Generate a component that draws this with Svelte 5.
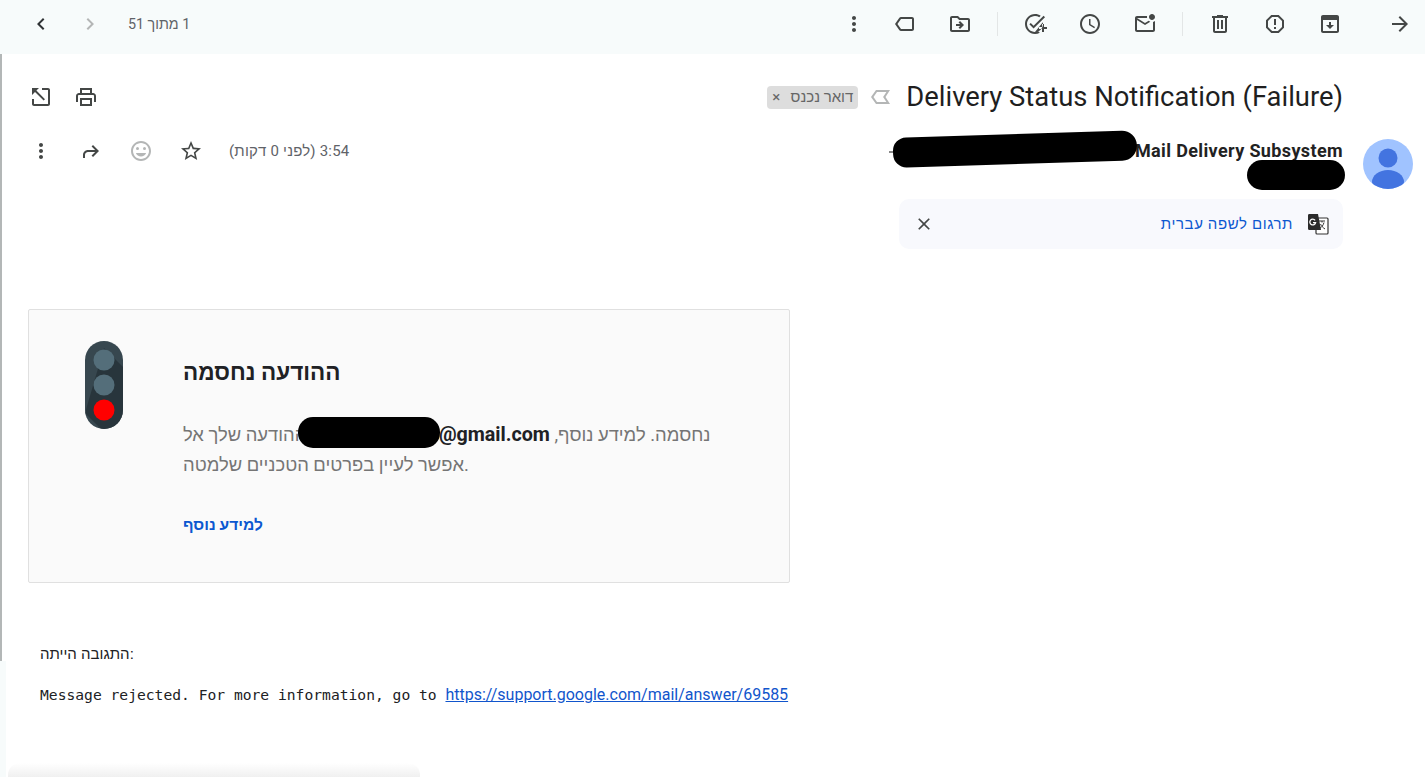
<script>
  const icons = {
    chevL: 'M15.41 7.41L14 6l-6 6 6 6 1.41-1.41L10.83 12z',
    chevR: 'M10 6L8.59 7.41 13.17 12l-4.58 4.59L10 18l6-6z',
    more: 'M12 8c1.1 0 2-.9 2-2s-.9-2-2-2-2 .9-2 2 .9 2 2 2zm0 2c-1.1 0-2 .9-2 2s.9 2 2 2 2-.9 2-2-.9-2-2-2zm0 6c-1.1 0-2 .9-2 2s.9 2 2 2 2-.9 2-2-.9-2-2-2z',
    label: 'M6.37 5.84C6.73 5.33 7.33 5 8 5l11 .01c1.1 0 2 .89 2 1.99v10c0 1.1-.9 1.99-2 1.99L8 19c-.67 0-1.27-.33-1.63-.84L2 12l4.37-6.16zM8 17h11V7H8l-3.55 5L8 17z',
    move: 'M20 6h-8l-2-2H4c-1.1 0-2 .9-2 2v12c0 1.1.9 2 2 2h16c1.1 0 2-.9 2-2V8c0-1.1-.9-2-2-2zm0 12H4V6h5.17l2 2H20v10zM12.16 12H8v2h4.16l-1.6 1.59L12 17l4-4-4-4-1.44 1.41L12.16 12z',
    task: 'M22 5.18L10.59 16.6l-4.24-4.24 1.41-1.41 2.83 2.83 10-10L22 5.18zm-2.21 5.04c.13.57.21 1.17.21 1.78 0 4.42-3.58 8-8 8s-8-3.58-8-8 3.58-8 8-8c1.58 0 3.04.46 4.28 1.25l1.44-1.44C16.1 2.67 14.13 2 12 2 6.48 2 2 6.48 2 12s4.48 10 10 10c1.73 0 3.36-.44 4.78-1.22l-1.5-1.5c-1 .46-2.11.72-3.28.72zM19 15h-3v2h3v3h2v-3h3v-2h-3v-3h-2v3z',
    clock: 'M11.99 2C6.47 2 2 6.48 2 12s4.47 10 9.99 10C17.52 22 22 17.52 22 12S17.52 2 11.99 2zM12 20c-4.42 0-8-3.58-8-8s3.58-8 8-8 8 3.58 8 8-3.58 8-8 8zm.5-13H11v6l5.25 3.15.75-1.23-4.5-2.67z',
    mail: 'M22 8.98V18c0 1.1-.9 2-2 2H4c-1.1 0-2-.9-2-2V6c0-1.1.9-2 2-2h10.1c-.06.32-.1.66-.1 1 0 .34.04.68.1 1H4l8 5 3.67-2.29c.47.43 1.02.76 1.63.98L12 13 4 8v10h16V9.9c.74-.15 1.42-.48 2-.92zM16 5c0 1.66 1.34 3 3 3s3-1.34 3-3-1.34-3-3-3-3 1.34-3 3z',
    trash: 'M15 4V3H9v1H4v2h1v13c0 1.1.9 2 2 2h10c1.1 0 2-.9 2-2V6h1V4h-5zm2 15H7V6h10v13zM9 8h2v9H9zm4 0h2v9h-2z',
    report: 'M15.73 3H8.27L3 8.27v7.46L8.27 21h7.46L21 15.73V8.27L15.73 3zM19 14.9L14.9 19H9.1L5 14.9V9.1L9.1 5h5.8L19 9.1v5.8zM11 7h2v6h-2zm0 8h2v2h-2z',
    inbox: 'M19 3H5c-1.1 0-2 .9-2 2v14c0 1.1.9 2 2 2h14c1.1 0 2-.9 2-2V5c0-1.1-.9-2-2-2zm0 16H5V8h14v11zM13 10h-2v3H8l4 4 4-4h-3z',
    forward: 'M12 4l-1.41 1.41L16.17 11H4v2h12.17l-5.58 5.59L12 20l8-8z',
    expand: 'M5 3h14c1.1 0 2 .9 2 2v14c0 1.1-.9 2-2 2H5c-1.1 0-2-.9-2-2v-5h2v5h14V5H13V3zM3 3h7l-2.6 2.6 8.6 8.6-1.4 1.4L6 7l-3 3z',
    print: 'M19 8h-1V3H6v5H5c-1.66 0-3 1.34-3 3v6h4v4h12v-4h4v-6c0-1.66-1.34-3-3-3zM8 5h8v3H8V5zm8 14H8v-4h8v4zm2-2v-4H6v4H4v-6c0-.55.45-1 1-1h14c.55 0 1 .45 1 1v6h-2z',
    reply: 'M14 6l6 6-6 6-1.41-1.41L16.17 13H9c-1.65 0-3 1.35-3 3v3H4v-3c0-2.76 2.24-5 5-5h7.17l-3.58-3.59z',
    smile: 'M11.99 2C6.47 2 2 6.48 2 12s4.47 10 9.99 10C17.52 22 22 17.52 22 12S17.52 2 11.99 2zM12 20c-4.42 0-8-3.58-8-8s3.58-8 8-8 8 3.58 8 8-3.58 8-8 8zM8.500 11a1.500 1.500 0 1 0 0-3 1.500 1.500 0 0 0 0 3zm7 0a1.500 1.500 0 1 0 0-3 1.500 1.500 0 0 0 0 3zM12 17.500c2.330 0 4.310-1.460 5.110-3.500H6.890c.8 2.040 2.780 3.500 5.110 3.500z',
    star: 'M22 9.24l-7.19-.62L12 2 9.19 8.63 2 9.24l5.46 4.73L5.82 21 12 17.27 18.18 21l-1.63-7.03L22 9.24zM12 15.4l-3.76 2.27 1-4.28-3.32-2.88 4.38-.38L12 6.1l1.71 4.04 4.38.38-3.32 2.88 1 4.28L12 15.4z',
    close: 'M19 6.41L17.59 5 12 10.59 6.41 5 5 6.41 10.59 12 5 17.59 6.41 19 12 13.41 17.59 19 19 17.59 13.41 12z',
    important: 'M21 5H7L2 12l5 7h14l-4.500-7L21 5zm-3.600 2l-3.300 5 3.300 5H8L4.500 12 8 7h9.400z'
  };
  const groupA = ['more', 'label', 'move'];
  const groupB = ['task', 'clock', 'mail'];
  const groupC = ['trash', 'report', 'inbox'];
</script>

{#snippet icon(name, cls = '')}
  <svg class="icon {cls}" viewBox="0 0 24 24" aria-hidden="true"><path d={icons[name]} /></svg>
{/snippet}

<div class="page">
  <header class="toolbar">
    <div class="pager">
      <span class="tool">{@render icon('chevL', 'dark')}</span>
      <span class="tool">{@render icon('chevR', 'faint')}</span>
      <span class="count" dir="rtl">1 מתוך 51</span>
    </div>
    <div class="actions">
      <div class="set first">
        {#each groupA as n}<span class="tool">{@render icon(n)}</span>{/each}
      </div>
      <i class="sep"></i>
      <div class="set">
        {#each groupB as n}<span class="tool">{@render icon(n)}</span>{/each}
      </div>
      <i class="sep"></i>
      <div class="set">
        {#each groupC as n}<span class="tool">{@render icon(n)}</span>{/each}
      </div>
      <span class="tool next">{@render icon('forward')}</span>
    </div>
  </header>

  <div class="view">
    <div class="rail"><i class="rail-line"></i><i class="rail-rest"></i></div>
    <main class="mail">
      <div class="subject-row">
        <div class="set tight">
          <span class="tool">{@render icon('expand')}</span>
          <span class="tool">{@render icon('print')}</span>
        </div>
        <div class="subject">
          <span class="chip"><span class="chip-x">×</span><span>דואר נכנס</span></span>
          {@render icon('important', 'imp')}
          <h1>Delivery Status Notification (Failure)</h1>
        </div>
      </div>

      <div class="sender-row">
        <div class="meta">
          <span class="tool">{@render icon('more')}</span>
          <span class="tool">{@render icon('reply')}</span>
          <span class="tool">{@render icon('smile', 'faint')}</span>
          <span class="tool">{@render icon('star')}</span>
          <span class="time" dir="rtl">3:54 (לפני 0 דקות)</span>
        </div>
        <div class="who">
          <b class="name">Mail Delivery Subsystem</b>
          <svg class="avatar" viewBox="0 0 50 50" aria-hidden="true">
            <defs><clipPath id="av"><circle cx="25" cy="25" r="25" /></clipPath></defs>
            <circle cx="25" cy="25" r="25" fill="#a0c3ff" />
            <g clip-path="url(#av)" fill="#4374e0">
              <circle cx="25" cy="19" r="9.500" />
              <ellipse cx="25" cy="43" rx="16" ry="12" />
            </g>
          </svg>
          <i class="dash"></i>
          <i class="blob blob-a"></i>
          <i class="blob blob-b"></i>
        </div>
      </div>

      <div class="translate">
        <span class="tool small">{@render icon('close')}</span>
        <span class="tr-text">תרגום לשפה עברית</span>
        <svg class="tr-icon" viewBox="0 0 22 22" aria-hidden="true">
          <rect x="9" y="5" width="12" height="16" rx="1" fill="#fff" stroke="#333" stroke-width="1.200" />
          <path d="M2 1h9l3 16H2a1.500 1.500 0 0 1-1-1.500V2.500A1.500 1.500 0 0 1 2 1z" fill="#2b2b2b" />
          <path d="M12 8h6M15 8v1.500M17 9.500c-.8 3-2.500 5-4.500 6M13.500 11c.8 1.800 2.300 3.600 4.500 5" fill="none" stroke="#333" stroke-width="1" />
          <path d="M8.100 7.300a2.900 2.900 0 1 0 .5 2.300H6" fill="none" stroke="#fff" stroke-width="1.300" />
        </svg>
      </div>

      <section class="card">
        <svg class="light" viewBox="0 0 38 88" aria-hidden="true">
          <defs><clipPath id="tl"><rect width="38" height="88" rx="19" /></clipPath></defs>
          <rect width="38" height="88" rx="19" fill="#37474f" />
          <path d="M19 7L38 26V88H16L0 72z" fill="#263238" clip-path="url(#tl)" opacity=".85" />
          <circle cx="19" cy="19" r="10.500" fill="#546e7a" />
          <circle cx="19" cy="44" r="10.500" fill="#546e7a" />
          <circle cx="19" cy="69" r="10.500" fill="#ff0000" />
        </svg>
        <div class="card-body">
          <h2>ההודעה נחסמה</h2>
          <p>ההודעה שלך אל <strong class="address"><span class="hidden-part"></span>@gmail.com</strong> נחסמה. למידע נוסף, אפשר לעיין בפרטים הטכניים שלמטה.<i class="blob blob-c"></i></p>
          <a class="more-link" href="#more">למידע נוסף</a>
        </div>
      </section>

      <div class="response">
        <div class="resp-title">התגובה הייתה:</div>
        <div class="resp-line"><span class="mono">Message rejected. For more information, go to{' '}</span><a href="#support">https://support.google.com/mail/answer/69585</a></div>
      </div>
      <i class="shadow"></i>
    </main>
  </div>
</div>

<style>
  :global(body) { margin: 0; background: #fff; }
  .page {
    width: 1425px; height: 777px; overflow: hidden; background: #fff;
    display: flex; flex-direction: column;
    font-family: Roboto, "Liberation Sans", sans-serif; color: #202124;
  }
  .toolbar {
    height: 54px; flex: none; box-sizing: border-box; background: #f7fbfb;
    display: flex; justify-content: space-between; align-items: center;
    padding: 0 0 6px 16px;
  }
  .pager { display: flex; align-items: center; }
  .count { font-size: 14.3px; color: #5f6368; margin-left: 14px; }
  .actions { display: flex; align-items: center; }
  .set { display: flex; align-items: center; }
  .tool { width: 55px; height: 40px; display: flex; align-items: center; justify-content: center; flex: none; }
  .first .tool:first-child { width: 46px; }
  .pager .tool { width: 49px; }
  .sep { width: 1px; height: 24px; background: #e3e6e6; margin: 0 9px 0 10px; flex: none; }
  .next { margin-left: 18px; width: 50px; }
  .icon { width: 24px; height: 24px; fill: #444746; display: block; }
  .icon.dark { fill: #303335; }
  .icon.faint { fill: #b4b6b6; }
  .view { flex: 1; display: flex; min-height: 0; }
  .rail { width: 6px; flex: none; display: flex; flex-direction: column; }
  .rail-line { height: 607px; width: 2px; background: #b3b7b7; flex: none; }
  .rail-rest { flex: 1; background: #f7fbfb; }
  .mail { flex: 1; min-width: 0; position: relative; }
  .subject-row {
    display: flex; align-items: center; justify-content: space-between;
    height: 50px; margin-top: 18px; padding-right: 82px;
  }
  .tight { margin-left: 12px; }
  .tight .tool { width: 45px; }
  .subject { display: flex; align-items: center; }
  h1 { margin: 0 0 0 13px; font-size: 27.4px; font-weight: 400; line-height: 36px; color: #1f1f1f; white-space: nowrap; }
  .chip {
    background: #dddddd; border-radius: 4px; height: 23px; width: 91px; box-sizing: border-box;
    display: flex; align-items: center; justify-content: space-between; padding: 0 5px 0 5px;
    font-size: 15px; color: #666; margin-right: 1px;
  }
  .chip-x { font-size: 15px; }
  .imp { fill: #b4b6b6; margin-left: 10px; }
  .sender-row {
    display: flex; justify-content: space-between; align-items: flex-start;
    height: 73px; margin-top: 4px; padding-right: 12px;
  }
  .meta { display: flex; align-items: center; height: 50px; margin-left: 10px; }
  .meta .tool { width: 50px; }
  .time { font-size: 15px; letter-spacing: .2px; color: #5f6368; margin-left: 13px; white-space: nowrap; }
  .who { position: relative; display: flex; align-items: flex-start; padding-top: 13px; }
  .name { font-size: 18px; font-weight: 700; line-height: 24px; color: #222; white-space: nowrap; letter-spacing: .37px; }
  .avatar { width: 50px; height: 50px; margin-left: 20px; flex: none; }
  .blob { position: absolute; background: #000; display: block; }
  .blob-a { right: 276px; top: 8px; width: 244px; height: 30px; border-radius: 16px 18px 18px 16px; transform: rotate(-1.8deg); }
  .blob-b { right: 68px; top: 34px; width: 98px; height: 30px; border-radius: 15px; }
  .dash { position: absolute; right: 519px; top: 25px; width: 5px; height: 2px; background: #888; }
  .translate {
    width: 444px; height: 50px; box-sizing: border-box; margin-left: 893px;
    background: #f8f9fd; border-radius: 10px;
    display: flex; align-items: center; padding: 0 14px 0 0;
  }
  .translate .small { width: 50px; }
  .translate .small .icon { width: 20px; height: 20px; }
  .tr-text { margin-left: auto; color: #0b57d0; font-size: 15px; letter-spacing: .6px; direction: rtl; }
  .tr-icon { width: 22px; height: 22px; margin-left: 14px; flex: none; }
  .card {
    width: 762px; height: 274px; box-sizing: border-box; margin: 60px 0 0 22px;
    background: #fafafa; border: 1px solid #e0e0e0; border-radius: 2px;
    display: flex; align-items: flex-start; padding: 31px 0 0 56px;
  }
  .light { width: 38px; height: 88px; flex: none; }
  .card-body { width: 532px; margin-left: 60px; position: relative; }
  h2 { margin: 16px 0 0; font-size: 22.5px; line-height: 30px; font-weight: 700; color: #202124; }
  p { margin: 33px 0 0; font-size: 18.4px; line-height: 30px; color: #757575; position: relative; }
  .address { font-weight: 700; font-size: 19.7px; color: #202124; }
  .hidden-part { display: inline-block; width: 128px; }
  .blob-c { left: 115px; top: -3px; width: 142px; height: 31px; border-radius: 15px; }
  .more-link { display: inline-block; margin-top: 33px; font-size: 15.6px; line-height: 24px; font-weight: 700; color: #0b57d0; text-decoration: none; }
  .response { margin: 61px 0 0 34px; color: #202124; }
  .resp-title { font-size: 15px; line-height: 20px; font-family: "Liberation Sans", sans-serif; }
  .resp-line { margin-top: 20px; white-space: nowrap; line-height: 22px; }
  .mono { font-family: "DejaVu Sans Mono", monospace; font-size: 14.65px; white-space: pre; }
  .resp-line a { font-size: 16px; color: #1155cc; text-decoration: underline; }
  .shadow { position: absolute; left: 2px; bottom: 0; width: 412px; height: 14px; background: linear-gradient(to bottom, rgba(240,240,240,0), #f0f0f0); border-radius: 12px 12px 0 0; }
</style>
